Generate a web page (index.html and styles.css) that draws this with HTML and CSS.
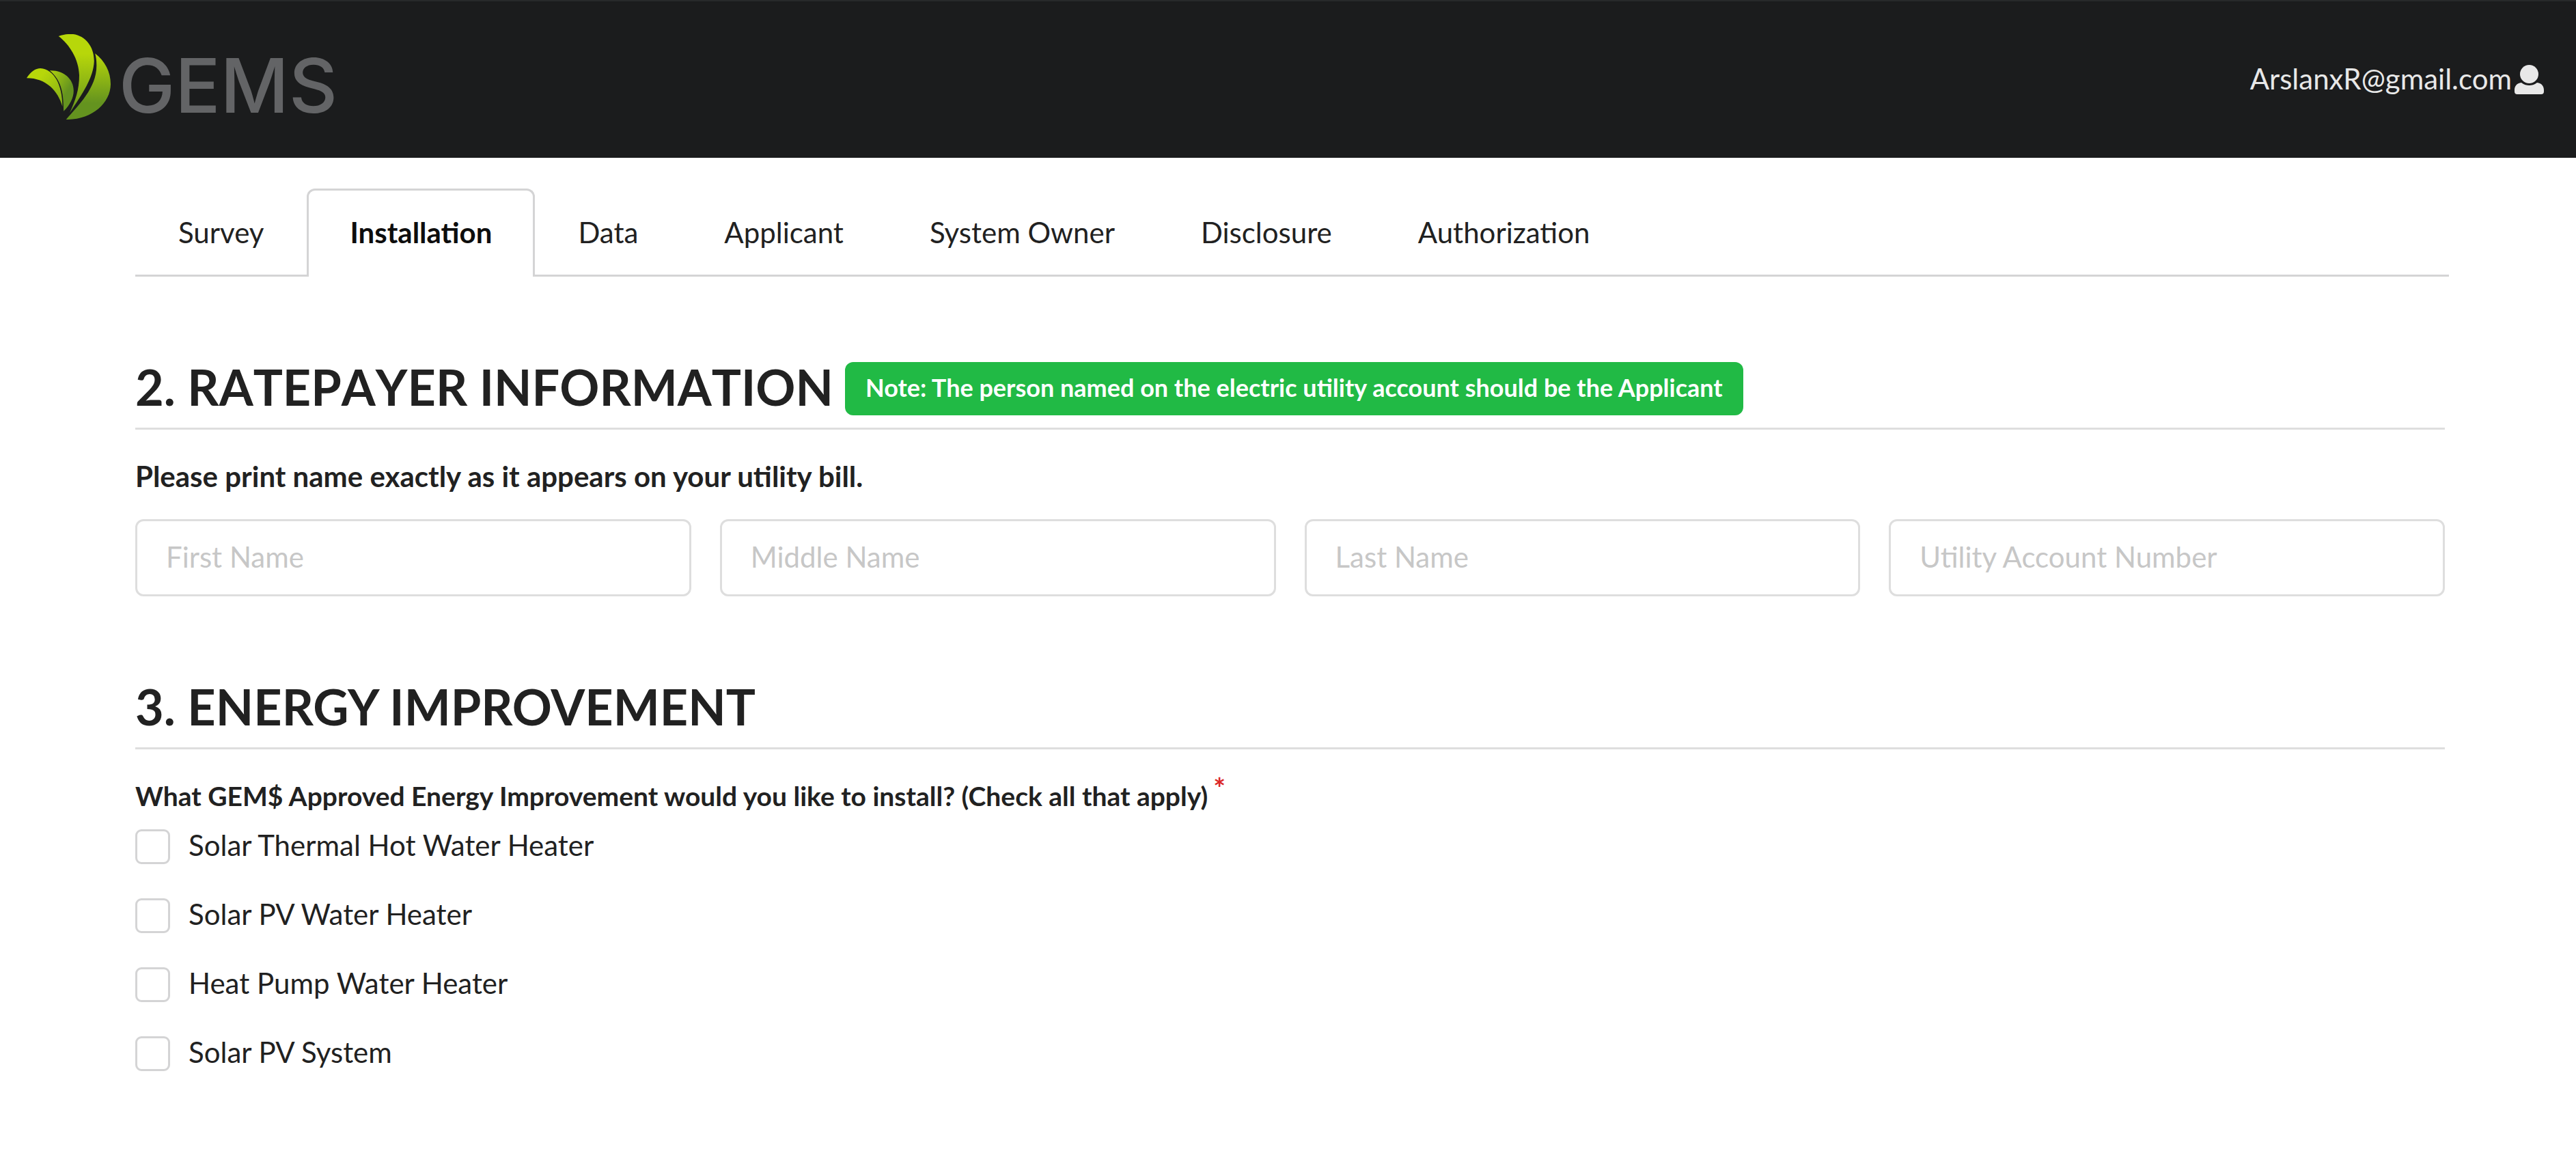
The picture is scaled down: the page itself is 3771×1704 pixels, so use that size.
FILE: index.html
```html
<!DOCTYPE html>
<html lang="en">
<head>
<meta charset="utf-8">
<meta name="viewport" content="width=device-width, initial-scale=1">
<title>GEMS – Installation</title>
<link rel="stylesheet" href="styles.css">
</head>
<body>
<header class="topbar">
  <a class="logo" href="#">
    <svg class="logo-mark" viewBox="109 150 345 375" preserveAspectRatio="none" aria-hidden="true">
      <defs>
        <linearGradient id="leaf" x1="0" y1="0" x2="0" y2="1">
          <stop offset="0.25" stop-color="#b7d70a"/>
          <stop offset="1" stop-color="#64931f"/>
        </linearGradient>
        <linearGradient id="leaf-dark" x1="0" y1="0" x2="0" y2="1">
          <stop offset="0" stop-color="#b7d70a"/>
          <stop offset="0.75" stop-color="#64931f"/>
        </linearGradient>
        <linearGradient id="leaf-small" x1="0" y1="0" x2="1" y2="1">
          <stop offset="0.3" stop-color="#b7d70a"/>
          <stop offset="1" stop-color="#7fab18"/>
        </linearGradient>
        <linearGradient id="leaf-small-dark" x1="0" y1="0" x2="0.7" y2="0.7">
          <stop offset="0.1" stop-color="#a9cb10"/>
          <stop offset="0.9" stop-color="#64931f"/>
        </linearGradient>
      </defs>
      <path fill="url(#leaf)" d="M240 159C262 150 282 149 300 150C350 157 387 205 386 270C383 342 338 412 286 496C310 438 325 395 325 330C323 260 285 195 240 159Z"/>
      <path fill="url(#leaf-dark)" d="M390 235C430 268 454 315 454 370C453 455 375 527 271 525C322 462 398 385 396 285C396 265 394 250 390 235Z"/>
      <path fill="url(#leaf-small)" d="M109 343C125 315 145 300 166 300C222 305 256 372 256 468C238 400 190 343 109 343Z"/>
      <path fill="url(#leaf-small-dark)" d="M204 310C262 308 302 348 302 398C302 430 286 462 261 488C260 420 257 358 204 310Z"/>
    </svg>
    <span class="logo-text">GEMS</span>
  </a>
  <a class="account" href="#">ArslanxR@gmail.com
    <svg class="account-icon" viewBox="0 0 43 43" aria-hidden="true">
      <circle cx="21.500" cy="13.500" r="13.500"/>
      <path d="M10 26C14 29 18 30 21.500 30S29 29 33 26C40 27 43 31 43 37V39Q43 43 39 43H4Q0 43 0 39V37C0 31 3 27 10 26Z"/>
    </svg>
  </a>
</header>
<main class="container">
  <nav class="tabs">
    <a class="tab" href="#">Survey</a>
    <a class="tab tab-active" href="#" aria-current="page">Installation</a>
    <a class="tab" href="#">Data</a>
    <a class="tab" href="#">Applicant</a>
    <a class="tab" href="#">System Owner</a>
    <a class="tab" href="#">Disclosure</a>
    <a class="tab" href="#">Authorization</a>
  </nav>
  <form>
    <section class="section">
      <div class="section-head">
        <h2 class="section-title title-unkerned">2. RATEPAYER INFORMATION</h2>
        <span class="note">Note: The person named on the electric utility account should be the Applicant</span>
      </div>
      <p class="hint">Please print name exactly as it appears on your utility bill.</p>
      <div class="fields">
        <input class="field" type="text" placeholder="First Name" aria-label="First Name">
        <input class="field" type="text" placeholder="Middle Name" aria-label="Middle Name">
        <input class="field" type="text" placeholder="Last Name" aria-label="Last Name">
        <input class="field" type="text" placeholder="Utility Account Number" aria-label="Utility Account Number">
      </div>
    </section>
    <section class="section">
      <div class="section-head">
        <h2 class="section-title">3. ENERGY IMPROVEMENT</h2>
      </div>
      <fieldset class="options">
        <legend class="question">What GEM$ Approved Energy Improvement would you like to install? (Check all that apply)<span class="required">*</span></legend>
        <label class="option"><input class="box" type="checkbox"><span class="option-text">Solar Thermal Hot Water Heater</span></label>
        <label class="option"><input class="box" type="checkbox"><span class="option-text">Solar PV Water Heater</span></label>
        <label class="option"><input class="box" type="checkbox"><span class="option-text">Heat Pump Water Heater</span></label>
        <label class="option"><input class="box" type="checkbox"><span class="option-text">Solar PV System</span></label>
      </fieldset>
    </section>
  </form>
</main>
</body>
</html>
```
FILE: styles.css
```css
* { box-sizing: border-box; }

body {
  margin: 0;
  background: #fff;
  color: #212121;
  font-family: Lato, "Liberation Sans", sans-serif;
  font-size: 42px;
  line-height: 60px;
}

a { color: inherit; text-decoration: none; }

.topbar {
  display: flex;
  align-items: center;
  justify-content: space-between;
  min-height: 231px;
  padding: 0 47px 8px 39px;
  border-top: 2px solid #27292a;
  background: #1b1c1d;
}

.logo { display: flex; align-items: center; gap: 12px; }
.logo-mark { width: 123px; height: 125px; }
.logo-text {
  padding-top: 26px;
  color: #636466;
  font-family: Inter, Lato, sans-serif;
  font-size: 110px;
  font-weight: 500;
  line-height: 99px;
}

.account {
  display: flex;
  align-items: flex-end;
  gap: 4px;
  padding-top: 5px;
  color: #e8e8e8;
  line-height: 45px;
}
.account-icon { width: 43px; height: 43px; fill: currentColor; }

.container { margin: 0 192px 0 198px; padding-top: 45px; }

.tabs { display: flex; margin-right: -6px; border-bottom: 3px solid #d4d4d5; }
.tab {
  margin-bottom: -3px;
  padding: 31px 60px 35px;
  border: 3px solid transparent;
  border-bottom: 0;
  border-radius: 12px 12px 0 0;
}
.tab-active {
  border-color: #d4d4d5;
  background: #fff;
  color: #0d0d0d;
  font-weight: 700;
}

.section { padding-top: 125px; }
.section-head {
  display: flex;
  align-items: center;
  gap: 17px;
  padding-bottom: 18px;
  border-bottom: 3px solid #dedede;
}
.section-title {
  margin: 0;
  padding-bottom: 6px;
  font-size: 72px;
  font-weight: 700;
  line-height: 72px;
}
.title-unkerned { font-kerning: none; }
.note {
  padding: 19px 30px 23px;
  border-radius: 12px;
  background: #21ba45;
  color: #fff;
  font-size: 36px;
  font-weight: 700;
  line-height: 36px;
}

.hint { margin: 38px 0 33px; font-weight: 700; }

.fields { display: grid; grid-template-columns: repeat(4, 1fr); gap: 42px; }
.field {
  width: 100%;
  min-width: 0;
  height: 113px;
  padding: 0 42px 4px;
  border: 3px solid #dedede;
  border-radius: 12px;
  background: #fff;
  color: inherit;
  font: inherit;
}
.field::placeholder { color: #c7c7c7; opacity: 1; }

.options { margin: 0; padding: 0; border: 0; }
.question {
  padding: 38px 0 12px;
  font-size: 39px;
  font-weight: 700;
}
.required {
  margin-left: 8px;
  color: #db2828;
  font-size: 42px;
  line-height: 0;
  vertical-align: 10px;
}

.option {
  display: flex;
  align-items: center;
  gap: 27px;
  width: fit-content;
  margin-bottom: 37px;
}
.option-text { padding-bottom: 4px; }
.box {
  appearance: none;
  width: 51px;
  height: 51px;
  margin: 0;
  border: 3px solid #d4d4d5;
  border-radius: 9px;
  background: #fff;
}
.box:checked { background: #21ba45; }
```
